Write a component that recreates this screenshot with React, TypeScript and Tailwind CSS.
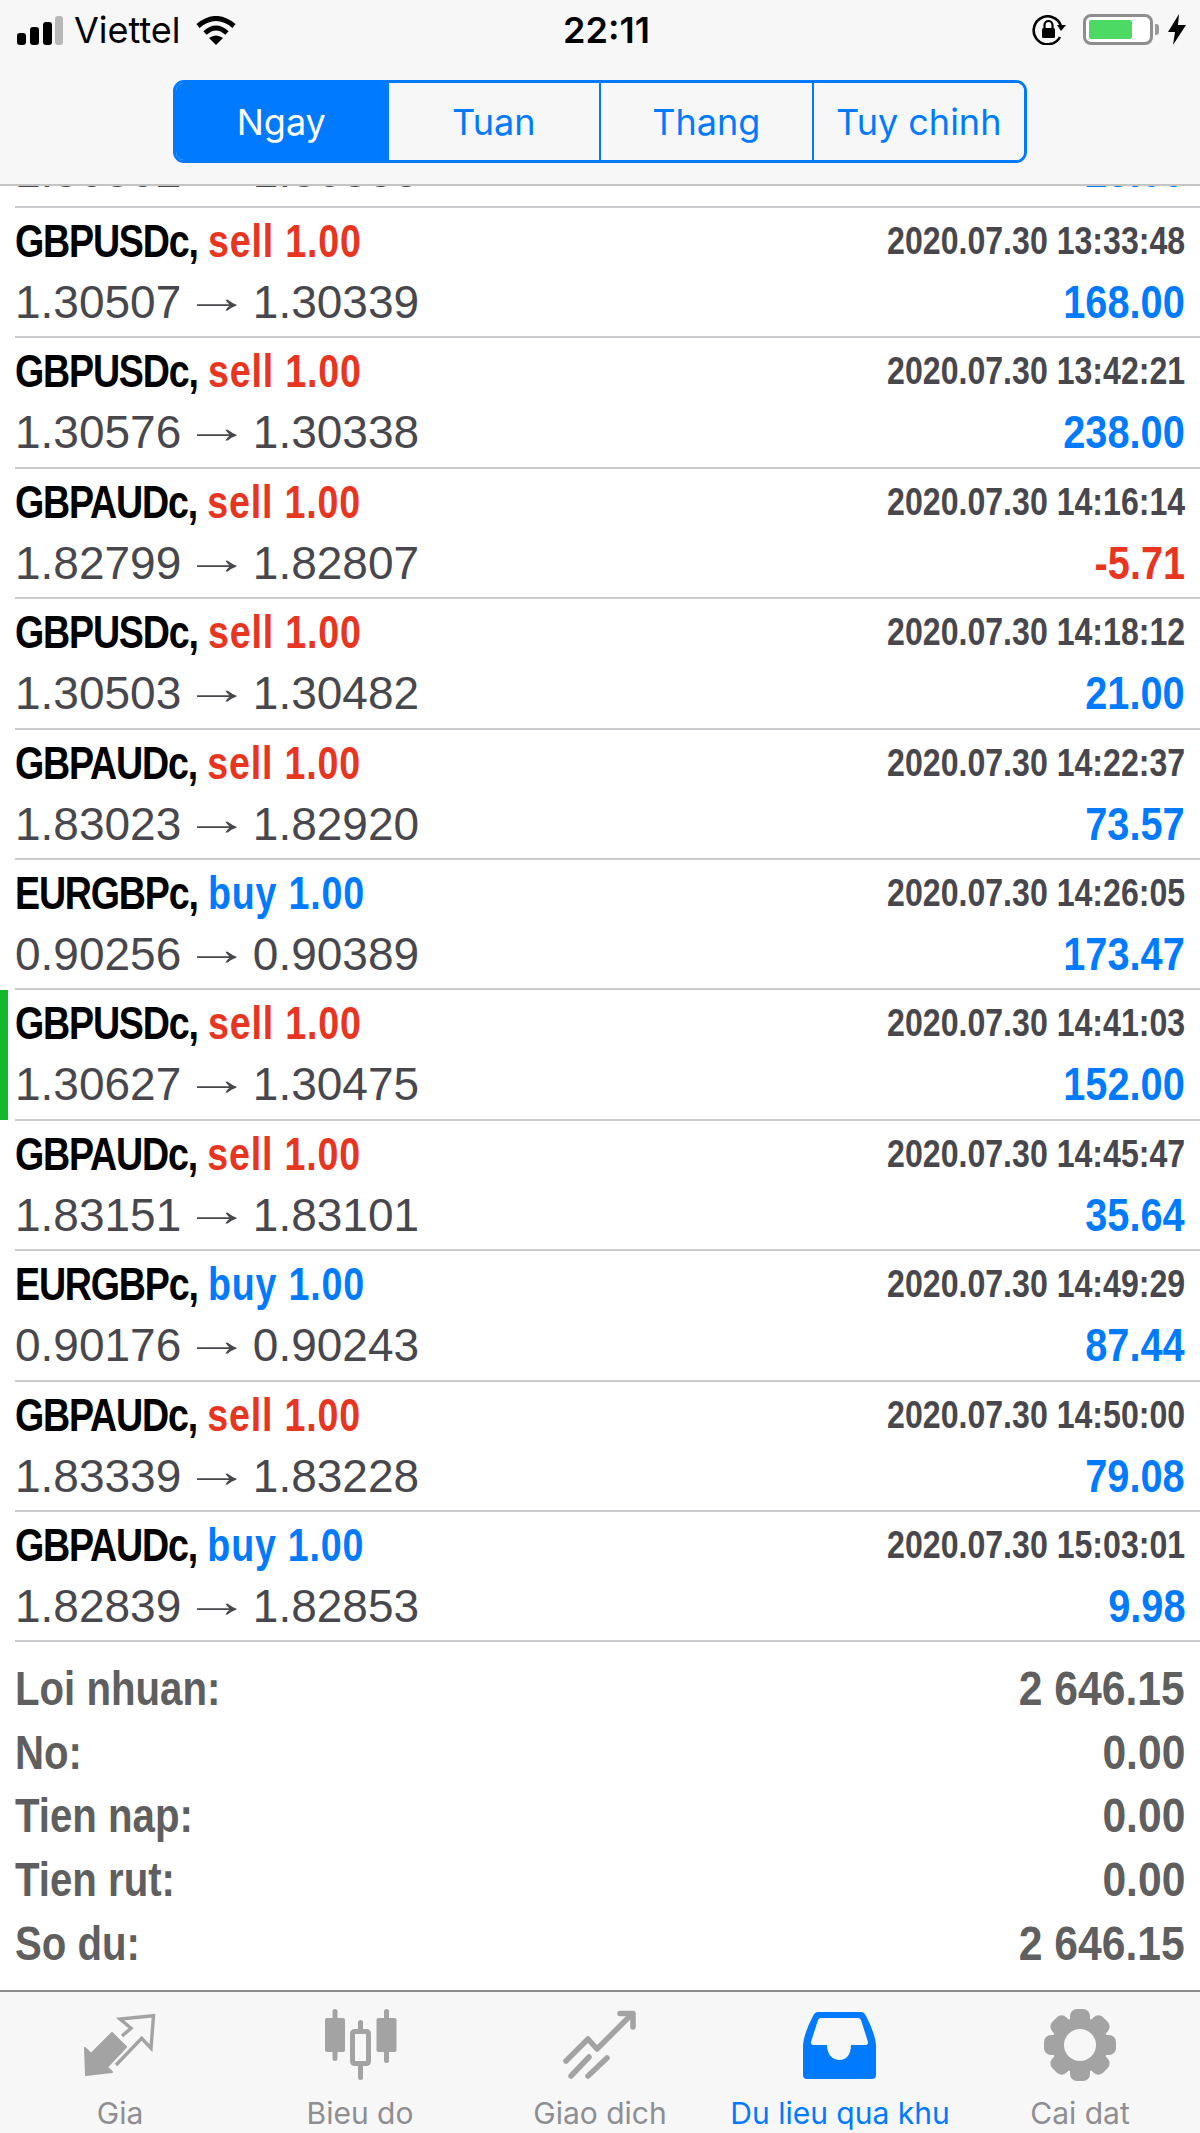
import React from 'react';

type Trade = {
  symbol: string;
  side: 'buy' | 'sell';
  open: string;
  close: string;
  time: string;
  profit: string;
  marked?: boolean;
};

const trades: Trade[] = [
  { symbol: 'GBPUSDc', side: 'sell', open: '1.30507', close: '1.30339', time: '2020.07.30 13:33:48', profit: '168.00' },
  { symbol: 'GBPUSDc', side: 'sell', open: '1.30576', close: '1.30338', time: '2020.07.30 13:42:21', profit: '238.00' },
  { symbol: 'GBPAUDc', side: 'sell', open: '1.82799', close: '1.82807', time: '2020.07.30 14:16:14', profit: '-5.71' },
  { symbol: 'GBPUSDc', side: 'sell', open: '1.30503', close: '1.30482', time: '2020.07.30 14:18:12', profit: '21.00' },
  { symbol: 'GBPAUDc', side: 'sell', open: '1.83023', close: '1.82920', time: '2020.07.30 14:22:37', profit: '73.57' },
  { symbol: 'EURGBPc', side: 'buy', open: '0.90256', close: '0.90389', time: '2020.07.30 14:26:05', profit: '173.47' },
  { symbol: 'GBPUSDc', side: 'sell', open: '1.30627', close: '1.30475', time: '2020.07.30 14:41:03', profit: '152.00', marked: true },
  { symbol: 'GBPAUDc', side: 'sell', open: '1.83151', close: '1.83101', time: '2020.07.30 14:45:47', profit: '35.64' },
  { symbol: 'EURGBPc', side: 'buy', open: '0.90176', close: '0.90243', time: '2020.07.30 14:49:29', profit: '87.44' },
  { symbol: 'GBPAUDc', side: 'sell', open: '1.83339', close: '1.83228', time: '2020.07.30 14:50:00', profit: '79.08' },
  { symbol: 'GBPAUDc', side: 'buy', open: '1.82839', close: '1.82853', time: '2020.07.30 15:03:01', profit: '9.98' },
];

const summary = [
  ['Loi nhuan:', '2 646.15'],
  ['No:', '0.00'],
  ['Tien nap:', '0.00'],
  ['Tien rut:', '0.00'],
  ['So du:', '2 646.15'],
];

const PriceLine: React.FC<{ open: string; close: string; profit: string }> = ({ open, close, profit }) => {
  const profitColor = profit.startsWith('-') ? 'text-[#e8351f]' : 'text-[#007aff]';

  return (
    <div className="flex items-baseline justify-between leading-[52px] whitespace-nowrap">
      <span className="text-[46px] text-[#47474d]">
        {open} <span className="inline-block -translate-y-[5px] scale-x-[1.45]">→</span> {close}
      </span>
      <span className={`origin-right scale-x-[0.845] text-[47px] font-bold ${profitColor}`}>{profit}</span>
    </div>
  );
};

const TradeRow: React.FC<{ trade: Trade }> = ({ trade }) => {
  const sideColor = trade.side === 'buy' ? 'text-[#007aff]' : 'text-[#e8351f]';

  return (
    <div className="flex h-[130.4px] shrink-0">
      <div className="w-[15px] shrink-0 pb-[1px]">
        {trade.marked && <div className="h-full w-[8px] bg-[#14b82e]" />}
      </div>
      <div className="flex min-w-0 flex-1 flex-col gap-[6px] border-b-2 border-[#cbcbcf] pt-[7px] pr-[15px]">
        <div className="flex items-baseline justify-between leading-[52px] whitespace-nowrap">
          <span className="origin-left scale-x-[0.8] text-[47px] font-bold text-black">
            <span className="tracking-[-1.5px]">{trade.symbol},</span>{' '}
            <span className={`tracking-[1px] ${sideColor}`}>{trade.side} 1.00</span>
          </span>
          <span className="origin-right -translate-y-[3px] scale-x-[0.823] text-[39px] font-bold text-[#47474d]">
            {trade.time}
          </span>
        </div>
        <PriceLine open={trade.open} close={trade.close} profit={trade.profit} />
      </div>
    </div>
  );
};

const StatusBar = () => (
  <div className="flex h-[58px] items-end pb-[13px] font-['Inter',sans-serif] text-black">
    <div className="flex flex-1 items-end pl-[17px]">
      <svg width="46" height="29" viewBox="0 0 46 29">
        <rect x="0" y="17" width="9" height="12" rx="3" fill="#000" />
        <rect x="13" y="11" width="9" height="18" rx="3" fill="#000" />
        <rect x="26" y="6" width="9" height="23" rx="3" fill="#000" />
        <rect x="38" y="0" width="8" height="29" rx="3" fill="#b8b8b8" />
      </svg>
      <span className="ml-[11px] text-[36px] leading-[29px]">Viettel</span>
      <svg className="ml-[15px]" width="40" height="29" viewBox="0 0 40 29">
        <path d="M2 10 Q20 -5 38 10" fill="none" stroke="#000" strokeWidth="5" />
        <path d="M9 17 Q20 7 31 17" fill="none" stroke="#000" strokeWidth="5" />
        <path d="M13 22 Q20 17 27 22 L20 29 Z" fill="#000" />
      </svg>
    </div>
    <span className="ml-[10px] text-[36px] leading-[29px] font-semibold">22:11</span>
    <div className="flex flex-1 items-end justify-end pr-[14px]">
      <svg width="34" height="30" viewBox="0 0 34 30" className="mr-[17px]">
        <path d="M28 22 A14 14 0 1 1 29 11" fill="none" stroke="#000" strokeWidth="2.6" />
        <path d="M25 10 L34 10 L29 16 Z" fill="#000" />
        <rect x="10" y="13" width="13" height="10" rx="1.5" fill="#000" />
        <path d="M12.5 13 V10 A4 4 0 0 1 20.5 10 V13" fill="none" stroke="#000" strokeWidth="2.2" />
      </svg>
      <div className="flex items-center">
        <div className="h-[31px] w-[70px] rounded-[8px] border-[3px] border-[#8e8e8e] bg-white p-[3px]">
          <div className="h-full w-[43px] rounded-[2px] bg-[#4cd964]" />
        </div>
        <div className="ml-[2px] h-[11px] w-[4px] rounded-r-[3px] bg-[#9a9a9a]" />
      </div>
      <svg className="ml-[9px]" width="18" height="31" viewBox="0 0 18 31">
        <path d="M11 0 L0 18 H7 L5 31 L18 11 H10 Z" fill="#000" />
      </svg>
    </div>
  </div>
);

const segments = ['Ngay', 'Tuan', 'Thang', 'Tuy chinh'];

const SegmentedControl = () => (
  <div className="mx-auto mt-[22px] flex h-[83px] w-[854px] overflow-hidden rounded-[11px] border-[3px] border-[#007aff] font-['Inter',sans-serif] text-[36px]">
    {segments.map((label, i) => (
      <div
        key={label}
        className={`flex flex-1 items-center justify-center ${
          i === 0 ? 'bg-[#007aff] text-white' : 'border-l-2 border-[#007aff] bg-[#f7f7f7] text-[#007aff]'
        }`}
      >
        {label}
      </div>
    ))}
  </div>
);

const GiaIcon = () => (
  <svg width="120" height="90" viewBox="0 0 120 90">
    <path
      d="M52 28 L66 42 L47 62 L52 67 L26 70 L25 43 L31 49 Z"
      fill="#a3a3a3"
      stroke="#a3a3a3"
      strokeWidth="2"
      strokeLinejoin="round"
    />
    <path
      d="M56 60 L81.7 33.3 L91 43.3 L93.5 10.7 L60 14 L71 23.3 L62 31"
      fill="none"
      stroke="#a3a3a3"
      strokeWidth="3.4"
    />
  </svg>
);

const BieuDoIcon = () => (
  <svg width="120" height="90" viewBox="0 0 120 90" fill="#a3a3a3">
    <rect x="32.5" y="4" width="5" height="52" rx="2.5" />
    <rect x="25" y="13" width="20" height="34" rx="2" />
    <rect x="58" y="15" width="5" height="60" rx="2.5" />
    <rect x="52.5" y="26.5" width="16" height="32" rx="2" fill="#f7f7f7" stroke="#a3a3a3" strokeWidth="5" />
    <rect x="84" y="4" width="5" height="54" rx="2.5" />
    <rect x="76.5" y="13" width="20" height="34" rx="2" />
  </svg>
);

const GiaoDichIcon = () => (
  <svg width="120" height="90" viewBox="0 0 120 90" fill="none" stroke="#a3a3a3" strokeWidth="5.5" strokeLinecap="round" strokeLinejoin="round">
    <path d="M26 56 L48 34 L57 44 L92 9" />
    <path d="M80 8.5 H93 V22" />
    <path d="M31 71 L49 52" />
    <path d="M48 71 L67 53" />
  </svg>
);

const LichSuIcon = () => (
  <svg width="120" height="90" viewBox="0 0 120 90">
    <path
      fillRule="evenodd"
      fill="#007aff"
      d="M38 7 H81 Q84 7 86 11 Q95 28 96 40 V70 Q96 74 92 74 H27 Q23 74 23 70 V40 Q24 28 33 11 Q35 7 38 7 Z M41 13 H78 Q80 13 81 15 L88 37 Q88 40 86 40 H71 C71 50 66 55 59.5 55 C53 55 47 50 47 40 H33 Q31 40 31 37 L38 15 Q39 13 41 13 Z"
    />
  </svg>
);

const CaiDatIcon = () => (
  <svg width="120" height="90" viewBox="0 0 120 90" fill="#a3a3a3">
    {[0, 45, 90, 135, 180, 225, 270, 315].map((deg) => (
      <rect key={deg} x="50" y="4" width="20" height="18" rx="7" transform={`rotate(${deg} 60 40)`} />
    ))}
    <circle cx="60" cy="40" r="28" />
    <circle cx="60" cy="40" r="16" fill="#f7f7f7" />
  </svg>
);

const tabs = [
  { label: 'Gia', icon: <GiaIcon /> },
  { label: 'Bieu do', icon: <BieuDoIcon /> },
  { label: 'Giao dich', icon: <GiaoDichIcon /> },
  { label: 'Du lieu qua khu', icon: <LichSuIcon />, active: true },
  { label: 'Cai dat', icon: <CaiDatIcon /> },
];

const TabBar = () => (
  <div className="grid h-[143px] shrink-0 grid-cols-5 border-t-2 border-[#8c8c8c] bg-[#f7f7f7] pt-[13px] font-['Inter',sans-serif]">
    {tabs.map((tab) => (
      <div key={tab.label} className="flex flex-col items-center">
        {tab.icon}
        <span
          className={`text-[30px] leading-[36px] whitespace-nowrap ${
            tab.active ? 'text-[#007aff]' : 'text-[#8e8e93]'
          }`}
        >
          {tab.label}
        </span>
      </div>
    ))}
  </div>
);

export default function App() {
  return (
    <div className="flex h-[2133px] w-[1200px] flex-col overflow-hidden bg-white font-['Liberation_Sans',sans-serif]">
      <div className="h-[186px] shrink-0 border-b-2 border-[#c4c4c4] bg-[#f7f7f7]">
        <StatusBar />
        <SegmentedControl />
      </div>

      {/* only the foot of the price line shows, the rest is scrolled under the header */}
      <div className="ml-[15px] flex h-[22px] shrink-0 flex-col justify-end overflow-hidden border-b-2 border-[#cbcbcf] pr-[15px] pb-[9px]">
        <PriceLine open="1.30302" close="1.30333" profit="23.00" />
      </div>

      <div className="flex flex-col">
        {trades.map((trade) => (
          <TradeRow key={trade.time} trade={trade} />
        ))}
      </div>

      <div className="flex-1 pt-[15px] pr-[15px] pl-[15px] text-[49px] leading-[63.6px] font-bold text-[#5f5f5f]">
        {summary.map(([label, value]) => (
          <div key={label} className="flex justify-between whitespace-nowrap">
            <span className="origin-left scale-x-[0.82]">{label}</span>
            <span className="origin-right scale-x-[0.87]">{value}</span>
          </div>
        ))}
      </div>

      <TabBar />
    </div>
  );
}
